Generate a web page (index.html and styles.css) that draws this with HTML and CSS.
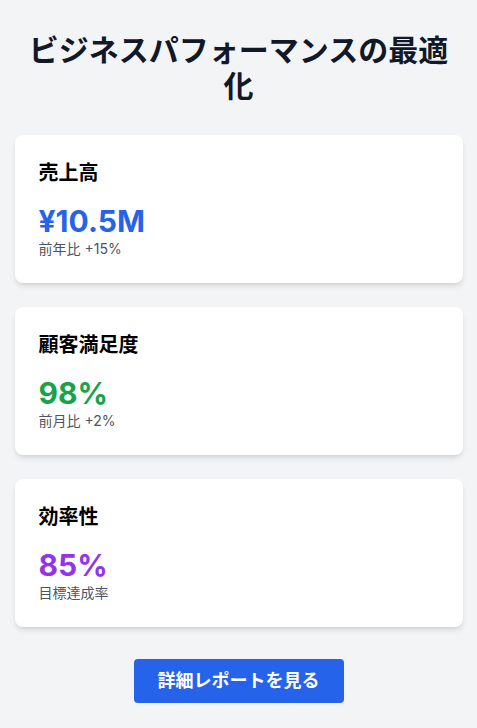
FILE: index.html
```html
<!DOCTYPE html>
<html lang="ja">
<head>
    <meta charset="UTF-8">
    <meta name="viewport" content="width=device-width, initial-scale=1.0">
    <title>ビジネスパフォーマンスの最適化</title>
    <link rel="stylesheet" href="styles.css">
</head>
<body>
    <div class="container">
        <h1>ビジネスパフォーマンスの最適化</h1>
        <div class="cards">
            <div class="card">
                <h2>売上高</h2>
                <p class="value blue">¥10.5M</p>
                <p class="note">前年比 +15%</p>
            </div>
            <div class="card">
                <h2>顧客満足度</h2>
                <p class="value green">98%</p>
                <p class="note">前月比 +2%</p>
            </div>
            <div class="card">
                <h2>効率性</h2>
                <p class="value purple">85%</p>
                <p class="note">目標達成率</p>
            </div>
        </div>
        <div class="actions">
            <button class="report-button">詳細レポートを見る</button>
        </div>
    </div>
</body>
</html>
```

FILE: styles.css
```css
body {
    font-family: Inter, "Noto Sans CJK JP", sans-serif;
    background-color: #f3f4f6;
    margin: 0;
}
.container {
    max-width: 448px;
    margin: 0 auto;
    padding: 32px 0;
}
h1 {
    font-size: 30px;
    line-height: 36px;
    font-weight: 700;
    color: #111827;
    text-align: center;
    margin: 0 0 31px;
}
.cards {
    display: flex;
    flex-direction: column;
    gap: 24px;
}
.card {
    background-color: #fff;
    padding: 24px;
    border-radius: 8px;
    box-shadow: 0 4px 6px -1px rgba(0, 0, 0, 0.1), 0 2px 4px -2px rgba(0, 0, 0, 0.1);
}
.card h2 {
    font-size: 20px;
    line-height: 28px;
    font-weight: 600;
    color: #000;
    margin: 0 0 16px;
}
.value {
    font-size: 30px;
    line-height: 36px;
    font-weight: 700;
    margin: 0;
}
.blue {
    color: #2563eb;
}
.green {
    color: #16a34a;
}
.purple {
    color: #9333ea;
}
.note {
    font-size: 14px;
    line-height: 20px;
    color: #4b5563;
    margin: 0;
}
.actions {
    display: flex;
    justify-content: center;
    margin-top: 32px;
}
.report-button {
    font-family: inherit;
    background-color: #2563eb;
    color: #fff;
    font-size: 18px;
    line-height: 28px;
    font-weight: 700;
    padding: 8px 24px;
    border: none;
    border-radius: 4px;
    cursor: pointer;
}
.report-button:hover {
    background-color: #1d4ed8;
}
```
